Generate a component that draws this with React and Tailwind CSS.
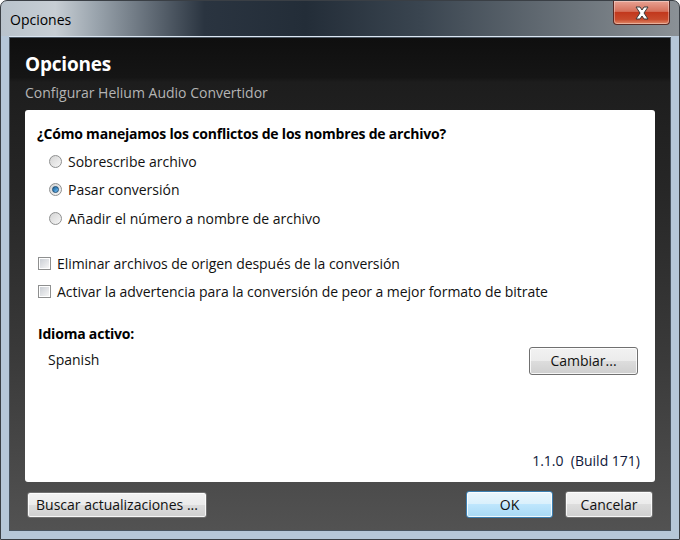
import React from 'react'

const ui = { fontFamily: '"Open Sans", "Noto Sans", sans-serif' }

function Radio({ checked, label }) {
  return (
    <div className="flex h-[28.5px] items-center pl-[24px]">
      <span className="relative flex h-[13px] w-[13px] items-center justify-center rounded-full border border-[#8e8f8f] bg-gradient-to-br from-[#d4d4d4] to-[#f6f6f6]">
        {checked && (
          <span className="h-[7px] w-[7px] rounded-full border border-[#1b4c73] bg-gradient-to-br from-[#2a628f] via-[#3f8fcb] to-[#84c6f3]" />
        )}
      </span>
      <span className="ml-[6px] text-[14px] text-[#111]">{label}</span>
    </div>
  )
}

function Check({ label }) {
  return (
    <div className="flex h-[28px] items-center pl-[13px]">
      <span className="flex h-[13px] w-[13px] items-center justify-center border border-[#8e8f8f] bg-white">
        <span className="h-[9px] w-[9px] bg-gradient-to-br from-[#cbcfd5] to-[#f6f6f6]" />
      </span>
      <span className="ml-[6px] text-[14px] tracking-[-0.05px] text-[#111]">{label}</span>
    </div>
  )
}

function Btn({ children, className = '', primary }) {
  return (
    <button
      className={
        'flex items-center justify-center rounded-[3px] border text-[14px] text-[#111] shadow-[inset_0_0_0_1px_rgba(255,255,255,0.8)] ' +
        (primary
          ? 'border-[#3c7fb1] bg-[linear-gradient(#eaf6fd_0%,#d9f0fc_50%,#bee6fd_50%,#a7d9f5_100%)] '
          : 'border-[#707070] bg-[linear-gradient(#f2f2f2_0%,#ebebeb_50%,#dddddd_50%,#cfcfcf_100%)] ') +
        className
      }
      style={ui}
    >
      {children}
    </button>
  )
}

export default function App() {
  return (
    <div
      className="flex h-[540px] w-[680px] flex-col overflow-hidden rounded-t-[7px] border border-[#3a3f45] bg-[linear-gradient(90deg,#b9c3cc_0%,#c7ced4_8%,#9aa4ad_14%,#2a3440_30%,#232d38_45%,#3a4550_62%,#6c747b_85%,#8b9196_100%)]"
      style={ui}
    >
      {/* title bar */}
      <div className="relative flex h-[35px] shrink-0 items-start">
        <span className="ml-[9px] mt-[8px] text-[14px] text-black">Opciones</span>
        <div className="absolute right-[9px] top-0 flex h-[24px] w-[57px] items-center justify-center rounded-b-[4px] border border-t-0 border-[#5a2a24] bg-[linear-gradient(#e8a293_0%,#d5705b_45%,#c2381d_50%,#c84a2c_80%,#e08a6a_100%)] shadow-[inset_0_0_0_1px_rgba(255,255,255,0.35)]">
          <svg width="16" height="14" viewBox="0 0 16 14">
            <path d="M2 1h4l2 3 2-3h4l-4 6 4 6h-4l-2-3-2 3H2l4-6z" fill="#fff" stroke="#3a3a3a" strokeWidth="1" />
          </svg>
        </div>
      </div>

      {/* frame sides */}
      <div className="flex flex-1 flex-col border-x-[8px] border-b-[8px] border-[#b6c7d8] bg-[#b6c7d8] pt-[1px] shadow-[inset_0_1px_0_#dbe6f2]">
        <div className="flex flex-1 flex-col border border-[#4a5560] bg-[linear-gradient(#0f0f0f_0%,#151515_8%,#1d1d1d_9%,#262626_30%,#3a3a3a_65%,#525252_100%)]">
          {/* header */}
          <div className="px-[15px] pt-[13px]">
            <div className="text-[19px] font-bold leading-[26px] tracking-[-0.2px] text-white">Opciones</div>
            <div className="mt-[6px] text-[14px] leading-[20px] text-[#b4b4b4]">
              Configurar Helium Audio Convertidor
            </div>
          </div>

          {/* panel */}
          <div className="mx-[15px] mt-[7px] flex h-[372px] flex-col rounded-[3px] bg-white">
            <div className="mt-[14px] pl-[12px] text-[14px] font-bold leading-[20px] tracking-[-0.2px] text-black">
              ¿Cómo manejamos los conflictos de los nombres de archivo?
            </div>
            <div className="mt-[3px]">
              <Radio label="Sobrescribe archivo" />
              <Radio checked label="Pasar conversión" />
              <Radio label="Añadir el número a nombre de archivo" />
            </div>
            <div className="mt-[17px]">
              <Check label="Eliminar archivos de origen después de la conversión" />
              <Check label="Activar la advertencia para la conversión de peor a mejor formato de bitrate" />
            </div>
            <div className="mt-[18px] pl-[13px] text-[14px] font-bold leading-[20px] tracking-[-0.2px] text-black">
              Idioma activo:
            </div>
            <div className="mt-[3px] flex items-start justify-between pr-[17px]">
              <span className="ml-[23px] mt-[3px] text-[14px] leading-[20px] text-[#111]">Spanish</span>
              <Btn className="h-[28px] w-[109px]">Cambiar...</Btn>
            </div>
            <div className="mt-auto mb-[11px] pr-[15px] text-right text-[14px] leading-[20px] text-[#10183a]">
              1.1.0&nbsp;&nbsp;(Build 171)
            </div>
          </div>

          {/* bottom buttons */}
          <div className="mt-[9px] flex items-center px-[17px]">
            <Btn className="h-[26px] w-[180px]">Buscar actualizaciones ...</Btn>
            <Btn primary className="ml-auto h-[27px] w-[87px]">OK</Btn>
            <Btn className="ml-[12px] h-[27px] w-[88px]">Cancelar</Btn>
          </div>
        </div>
      </div>
    </div>
  )
}
